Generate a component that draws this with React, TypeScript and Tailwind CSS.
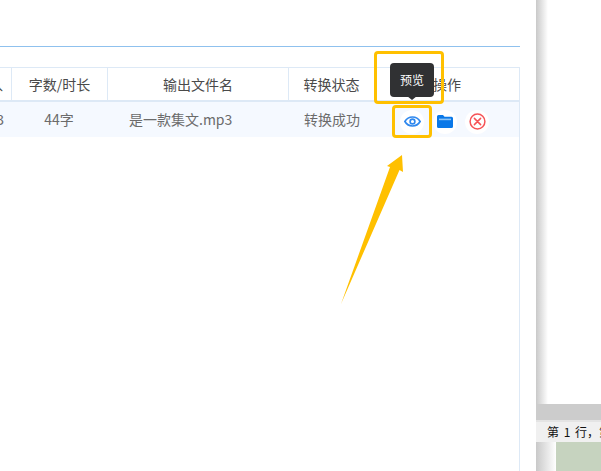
const columns = [
  { title: '字数/时长', value: '44字', width: 'w-[96px]', cell: 'justify-center pr-[2px]' },
  { title: '输出文件名', value: '是一款集文.mp3', width: 'w-[181px]', cell: 'pl-[21px]' },
  { title: '转换状态', value: '转换成功', width: 'w-[86px]', cell: 'justify-center' },
]

function EyeIcon() {
  return (
    <svg width="17" height="11" viewBox="0 0 17 11" fill="none">
      <path d="M.9 5.5C2.7 2.4 5.2 1 8.5 1S14.300 2.400 16.100 5.500C14.300 8.600 11.800 10 8.500 10S2.700 8.600.9 5.500Z" stroke="#2f88ee" strokeWidth="1.7" />
      <circle cx="8.500" cy="5.500" r="2.400" stroke="#2f88ee" strokeWidth="1.600" />
    </svg>
  )
}

function FolderIcon() {
  return (
    <svg width="16" height="13" viewBox="0 0 16 13">
      <path d="M0 1.500Q0 0 1.500 0H6L7.500 1.800H14.500Q16 1.800 16 3.300V11.500Q16 13 14.500 13H1.500Q0 13 0 11.500Z" fill="#0a78e8" />
      <rect x="2" y="3.600" width="12" height="1.600" fill="#8cc4f6" />
    </svg>
  )
}

function CloseIcon() {
  return (
    <svg width="17" height="17" viewBox="0 0 17 17" fill="none" stroke="#f65357" strokeWidth="1.500" strokeLinecap="round">
      <circle cx="8.500" cy="8.500" r="7.400" />
      <path d="M5.400 5.400 11.600 11.600M11.600 5.400 5.400 11.600" />
    </svg>
  )
}

function IconButton({ children }: { children: React.ReactNode }) {
  return (
    <div className="w-6 h-6 rounded-full bg-white flex items-center justify-center shrink-0">{children}</div>
  )
}

export default function App() {
  return (
    <div
      className="relative w-[601px] h-[471px] overflow-hidden bg-white flex text-sm"
      style={{ fontFamily: '"Noto Sans CJK SC", "Noto Sans", sans-serif' }}
    >
      {/* main panel */}
      <div className="w-[536px] shrink-0 pt-[46px]">
        <div className="w-[520px] h-full flex flex-col">
          <div className="h-px bg-[#8fc1ee]" />
          <div className="mt-5 flex-1 border-t border-r border-[#dde9f6]">
            {/* header */}
            <div className="h-[34px] flex border-b-2 border-[#dde9f6] text-[#4a4a4a]">
              <div className="w-[12px] border-r border-[#dde9f6] overflow-hidden flex items-center justify-end pr-2">
                <span className="shrink-0">入</span>
              </div>
              {columns.map((col) => (
                <div key={col.title} className={`${col.width} border-r border-[#dde9f6] flex items-center justify-center`}>
                  {col.title}
                </div>
              ))}
              <div className="flex-1 flex items-center justify-center">操作</div>
            </div>
            {/* row */}
            <div className="h-[35px] flex bg-[#f5f9ff] text-[#6b6b6b]">
              <div className="w-[12px] overflow-hidden flex items-center justify-end pr-2 pb-[2px]">
                <span className="shrink-0">3</span>
              </div>
              {columns.map((col) => (
                <div key={col.title} className={`${col.width} flex items-center pb-[2px] ${col.cell}`}>
                  {col.value}
                </div>
              ))}
              <div className="flex items-center gap-[9px] pl-[25px] pt-[4px]">
                <IconButton><EyeIcon /></IconButton>
                <IconButton><FolderIcon /></IconButton>
                <div className="-ml-px">
                  <IconButton><CloseIcon /></IconButton>
                </div>
              </div>
            </div>
          </div>
        </div>
      </div>

      {/* window behind */}
      <div className="flex-1 flex flex-col">
        <div className="flex-1 w-3 bg-gradient-to-r from-[#c9c9c9] to-white" />
        <div className="h-4 bg-[#cccccc]" />
        <div className="h-[22px] bg-[#f0f0f0] border-t-2 border-[#e4e4e4] flex items-center pl-[11px] text-xs text-[#111] whitespace-nowrap overflow-hidden [word-spacing:2px]">
          第 1 行，第 1 列
        </div>
        <div className="h-[29px] flex">
          <div className="w-5 bg-gradient-to-r from-[#c9c9c9] to-white" />
          <div className="flex-1 bg-[#c6d3bf]" />
        </div>
      </div>

      {/* tooltip */}
      <div className="absolute left-[390px] top-[63px] w-[44px] h-[34px] rounded bg-[#303133] text-white text-xs flex items-center justify-center">
        预览
        <div className="absolute left-[17px] -bottom-[3px] w-0 h-0 border-x-[5px] border-x-transparent border-t-[4px] border-t-[#303133]" />
      </div>

      {/* annotations */}
      <div className="absolute left-[374px] top-[51px] w-[70px] h-[53px] border-[3px] border-[#ffc000] rounded-sm" />
      <div className="absolute left-[392px] top-[105px] w-[40px] h-[33px] border-[3px] border-[#ffc000] rounded-sm" />
      <svg className="absolute left-0 top-0" width="601" height="471">
        <polygon points="402,155 387,166 390,167 341,304 399.500,170 403,172" fill="#ffc000" />
      </svg>
    </div>
  )
}
